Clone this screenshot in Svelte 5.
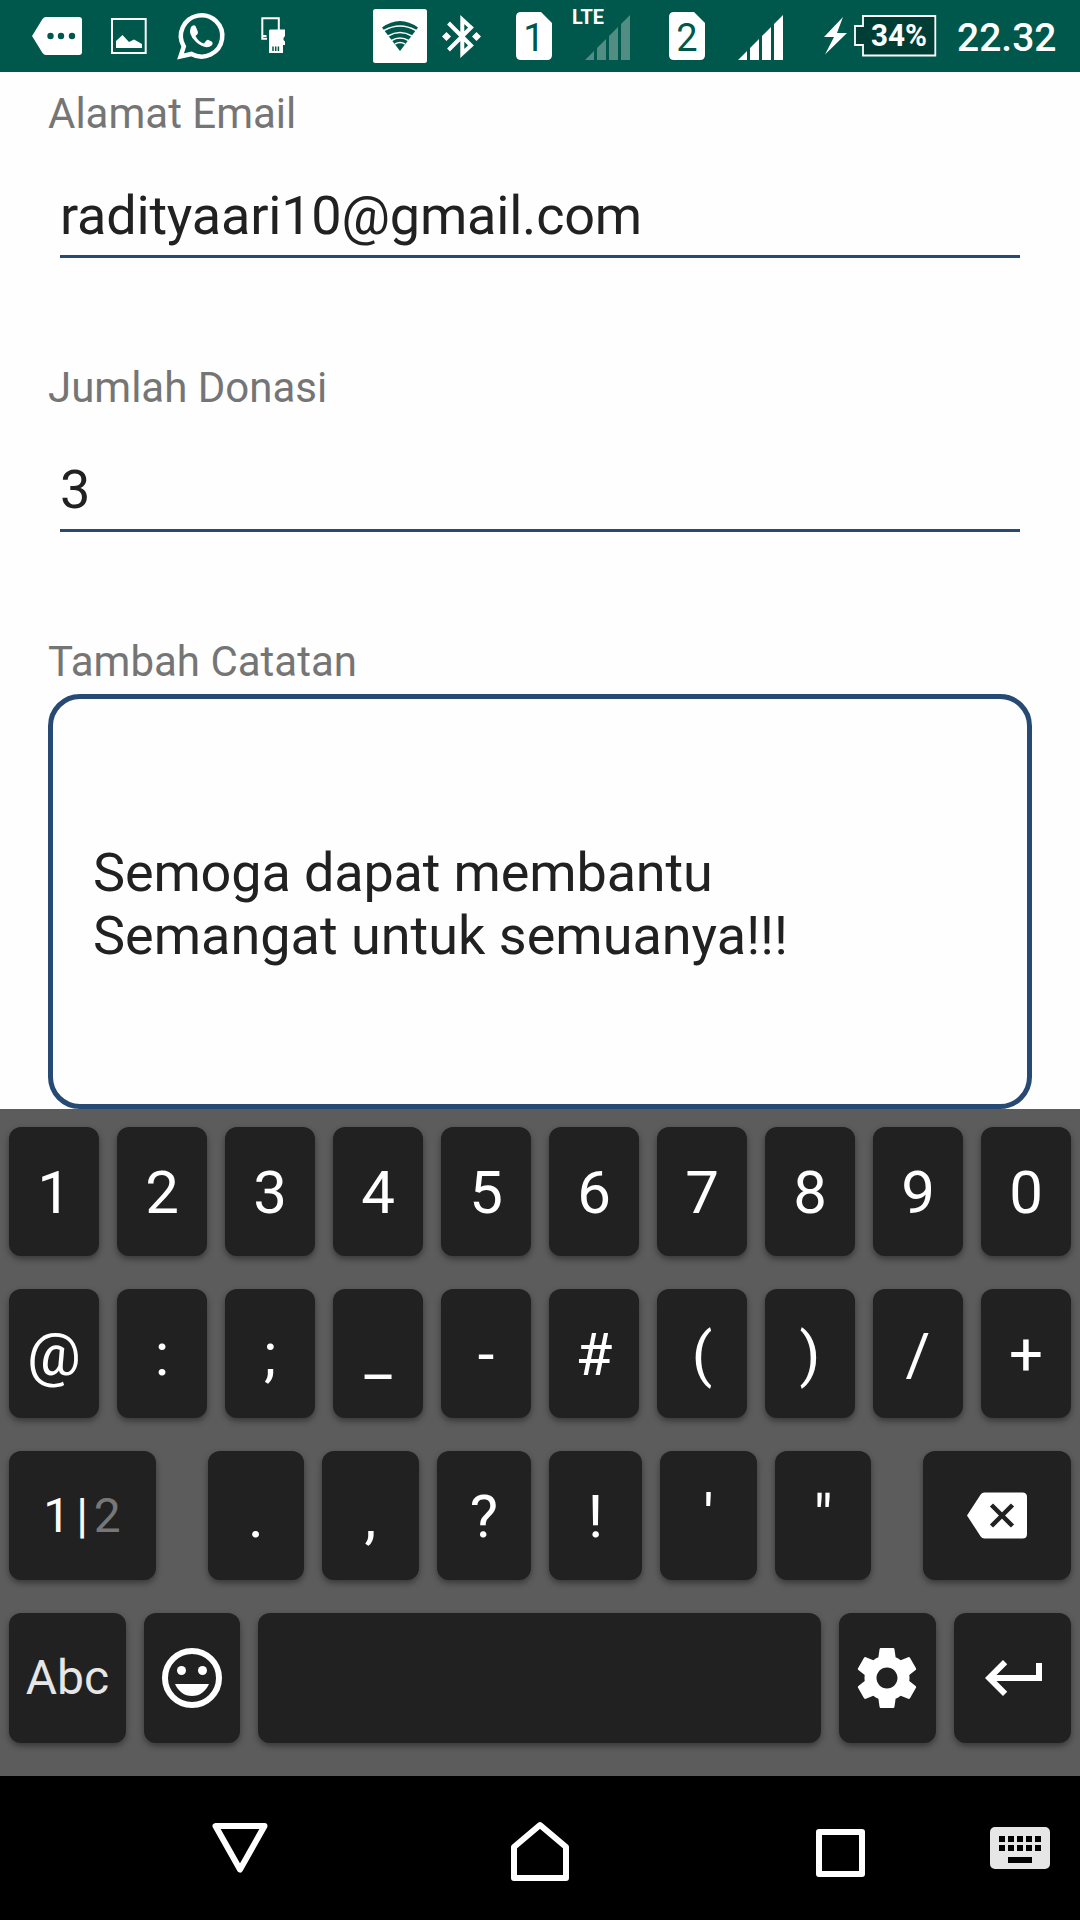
<script>
  const digits = ['1', '2', '3', '4', '5', '6', '7', '8', '9', '0'];
  const symbols = ['@', ':', ';', '_', '-', '#', '(', ')', '/', '+'];
  const marks = ['.', ',', '?', '!', "'", '"'];
</script>

<div class="screen">
  <header class="status">
    <svg width="560" height="72" viewBox="0 0 560 72" fill="#fff">
      <path d="M46 17H79Q82 17 82 20V52Q82 55 79 55H46Q44 55 42.500 53L32 36L42.500 19Q44 17 46 17Z" />
      <g fill="#00574b"><circle cx="50.500" cy="36" r="3.200" /><circle cx="61" cy="36" r="3.200" /><circle cx="72" cy="36" r="3.200" /></g>
      <path d="M112 19H145.700V53H112Z" fill="none" stroke="#fff" stroke-width="2" />
      <path d="M116 48V41L122.500 35L129 42L134 39.500L142 44V48Z" />
      <path d="M180.500 56.500L183.800 46.500A20.700 20.700 0 1 1 191.500 54Z" fill="none" stroke="#fff" stroke-width="4.500" stroke-linejoin="miter" />
      <path d="M191 27Q193.500 24 195.500 26L198 32Q198.500 34 195.500 36Q198.500 42 204 43.500Q206.500 39.500 208 39.700L212 41.700Q214 44.500 210 46.500Q204 49 196 42Q187.500 34 191 27Z" />
      <path d="M278.800 31V18.200H262.300V38.800H267" fill="none" stroke="#fff" stroke-width="2" />
      <path d="M262 35H266.500V37H262Z" />
      <path d="M270 29.500H285V36L283.500 38V40L285 41.500V45H283V53H269V30.500Z" />
      <path d="M273 46.500V51M275.700 46.500V51M278.400 46.500V51" stroke="#00574b" stroke-width="1.500" />
      <rect x="373" y="9" width="54" height="54" rx="2.500" />
      <path d="M400 51L382 27.500Q400 14.500 418 27.500Z" fill="#00574b" />
      <g fill="none" stroke="#fff" stroke-width="1.500">
        <path d="M384 30.500Q400 21.500 416 30.500" /><path d="M388 36Q400 29 412 36" /><path d="M391.500 40.500Q400 35.500 408.500 40.500" /><path d="M395 44Q400 41 405 44" />
      </g>
      <path d="M448.500 23L471 45.500L462.300 53.500V19.500L471 27.500L448.500 50" fill="none" stroke="#fff" stroke-width="4" />
      <path d="M446.500 32L451 36.500L446.500 41L442 36.500ZM476.500 32L481 36.500L476.500 41L472 36.500Z" />
      <path d="M521 12H541L552 23V55Q552 60 547 60H521Q516 60 516 55V17Q516 12 521 12Z" />
      <text x="534" y="51" class="sim">1</text>
    </svg>
    <svg width="520" height="72" viewBox="560 0 520 72" fill="#fff">
      <text x="572" y="24" class="lte" textLength="32" lengthAdjust="spacingAndGlyphs">LTE</text>
      <path d="M585 60L594 51V60ZM597 60V48L606 39V60ZM609 60V36L618 27V60ZM621 60V24L630 15V60Z" opacity=".32" />
      <path d="M674 12H694L705 23V55Q705 60 700 60H674Q669 60 669 55V17Q669 12 674 12Z" />
      <text x="687" y="51" class="sim">2</text>
      <path d="M738 60L747 51V60ZM750 60V48L759 39V60ZM762 60V36L771 27V60ZM774 60V24L783 15V60Z" />
      <path d="M843 17L824 37H834L825 54.500L847 33H837Z" />
      <path d="M863 16H935.300V55.500H863V45H855V26H863Z" fill="#003d34" stroke="#fff" stroke-width="1.800" />
      <text x="871" y="46" class="battery" textLength="56" lengthAdjust="spacingAndGlyphs">34%</text>
      <text x="957" y="51" class="clock">22.32</text>
    </svg>
  </header>

  <main class="form">
    <div class="field">
      <div class="label">Alamat Email</div>
      <div class="input email">radityaari10@gmail.com</div>
    </div>
    <div class="field">
      <div class="label">Jumlah Donasi</div>
      <div class="input">3</div>
    </div>
    <div class="field">
      <div class="label">Tambah Catatan</div>
      <div class="note"><span class="first">Semoga dapat membantu</span><span>Semangat untuk semuanya!!!</span></div>
    </div>
  </main>

  <section class="keyboard">
    <div class="row even">
      {#each digits as d}<div class="key">{d}</div>{/each}
    </div>
    <div class="row even">
      {#each symbols as s}<div class="key">{s}</div>{/each}
    </div>
    <div class="row third">
      <div class="key page"><span>1</span><span>|</span><span class="dim">2</span></div>
      <div class="marks">
        {#each marks as m}<div class="key">{m}</div>{/each}
      </div>
      <div class="key">
        <svg width="72" height="72" viewBox="0 0 72 72" fill="#fff"><path d="M23.500 12.500H61.500Q66 12.500 66 17V54Q66 58.500 61.500 58.500H23.500Q21 58.500 19.500 56.200L6 35.500L19.500 14.800Q21 12.500 23.500 12.500Z" /><path d="M30.500 25L51.500 46M51.500 25L30.500 46" stroke="#212121" stroke-width="4.500" /></svg>
      </div>
    </div>
    <div class="row fourth">
      <div class="key abc">Abc</div>
      <div class="key">
        <svg width="72" height="72" viewBox="0 0 72 72" fill="#fff"><circle cx="36" cy="36" r="27" fill="none" stroke="#fff" stroke-width="6" /><circle cx="25.500" cy="28.500" r="4.500" /><circle cx="46.500" cy="28.500" r="4.500" /><path d="M19 42H53C49.500 49.500 44 54 36 54S22.500 49.500 19 42Z" /></svg>
      </div>
      <div class="key"></div>
      <div class="key gear">
        <svg width="72" height="72" viewBox="0 0 24 24" fill="#fff"><path d="M19.430 12.980c.04-.32.07-.64.07-.98s-.03-.66-.07-.98l2.110-1.650c.19-.15.24-.42.12-.64l-2-3.460c-.12-.22-.39-.3-.61-.22l-2.490 1c-.52-.4-1.080-.73-1.690-.98l-.38-2.650C14.460 2.180 14.250 2 14 2h-4c-.25 0-.46.18-.49.42l-.38 2.650c-.61.25-1.170.59-1.690.98l-2.490-1c-.23-.09-.49 0-.61.22l-2 3.460c-.13.22-.07.49.12.64l2.110 1.650c-.04.32-.07.65-.07.98s.03.66.07.98l-2.110 1.650c-.19.15-.24.42-.12.64l2 3.460c.12.22.39.3.61.22l2.490-1c.52.4 1.080.73 1.690.98l.38 2.650c.03.24.24.42.49.42h4c.25 0 .46-.18.49-.42l.38-2.650c.61-.25 1.170-.59 1.690-.98l2.490 1c.23.09.49 0 .61-.22l2-3.460c.12-.22.07-.49-.12-.64l-2.110-1.650zM12 15.500c-1.930 0-3.500-1.570-3.500-3.500s1.570-3.500 3.500-3.500 3.500 1.570 3.500 3.500-1.570 3.500-3.500 3.500z" /></svg>
      </div>
      <div class="key enter">
        <svg width="72" height="72" viewBox="0 0 24 24" fill="#fff"><path d="M19 7v4H5.830l3.580-3.590L8 6l-6 6 6 6 1.410-1.410L5.830 13H21V7z" /></svg>
      </div>
    </div>
  </section>

  <nav class="nav">
    <svg width="1080" height="144" viewBox="0 1776 1080 144" fill="none" stroke="#fff" stroke-width="6" stroke-linejoin="round">
      <path d="M215.500 1826H264.500L240 1869.500Z" />
      <path d="M514 1847L540 1825L566 1847V1878H514Z" />
      <rect x="819" y="1832" width="43" height="42" />
      <rect x="990" y="1827" width="60" height="42" rx="5" fill="#e6e6e6" stroke="none" />
      <path d="M999 1839H1041M999 1848H1041" stroke="#000" stroke-dasharray="6 3" />
      <path d="M1008 1860H1032" stroke="#000" />
    </svg>
  </nav>
</div>

<style>
  :global(body) { margin: 0; background: #fff; }
  .screen { width: 1080px; height: 1920px; display: flex; flex-direction: column; overflow: hidden; font-family: Roboto, sans-serif; background: #fefefe; }
  .status { display: flex; height: 72px; background: #00574b; flex: none; }
  svg { display: block; flex: none; overflow: visible; }
  .sim { font-size: 38px; font-weight: 400; fill: #00574b; text-anchor: middle; }
  .lte { font-size: 21px; font-weight: 700; }
  .battery { font-size: 31px; font-weight: 700; }
  .clock { font-size: 39px; font-weight: 500; }

  .form { box-sizing: border-box; height: 1037px; padding: 17px 48px 0; flex: none; }
  .field { height: 274px; }
  .label { height: 49px; font-size: 42px; line-height: 49px; color: #757575; white-space: nowrap; }
  .input { box-sizing: border-box; height: 120px; margin: 0 12px; padding-top: 46px; font-size: 54px; line-height: 63px; color: #212121; border-bottom: 3px solid #264a73; }
  .email { letter-spacing: -0.2px; }
  .note { box-sizing: border-box; height: 415px; margin-top: 8px; padding: 5px 40px 0; display: flex; flex-direction: column; justify-content: center; font-size: 54px; line-height: 63px; color: #212121; border: 5px solid #264a73; border-radius: 32px; }
  .first { letter-spacing: -0.15px; }

  .keyboard { box-sizing: border-box; height: 667px; padding: 18px 9px 33px; display: flex; flex-direction: column; gap: 33px; background: #5c5c5c; flex: none; }
  .row { display: grid; height: 129px; column-gap: 18px; }
  .even { grid-template-columns: repeat(10, 90px); }
  .third { grid-template-columns: 147px 663px 148px; column-gap: 52px; }
  .marks { display: grid; grid-template-columns: 96px 97px 94px 93px 97px 96px; column-gap: 18px; }
  .fourth { height: 130px; grid-template-columns: 117px 96px 563px 97px 117px; }
  .key { box-sizing: border-box; display: flex; align-items: center; justify-content: center; color: #fff; font-size: 60px; line-height: 70px; background: #212121; border-radius: 12px; box-shadow: 0 3px 6px rgba(0, 0, 0, 0.4); }
  .even .key, .marks .key { padding-top: 3px; }
  .page { gap: 6px; padding-right: 1px; font-size: 48px; }
  .dim { color: #777; }
  .abc { font-size: 48px; color: #e6e6e6; }
  .gear { padding-right: 1px; }
  .enter { padding-left: 5px; }
  .nav { height: 144px; background: #000; flex: none; }
</style>
